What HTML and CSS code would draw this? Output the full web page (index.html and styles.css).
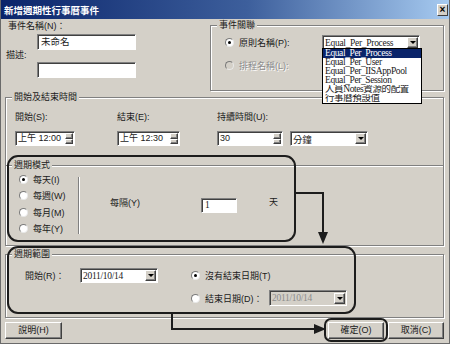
FILE: index.html
```html
<!DOCTYPE html>
<html lang="zh-Hant">
<head>
    <meta charset="utf-8">
    <title>新增週期性行事曆事件</title>
    <link rel="stylesheet" href="styles.css">
</head>
<body>
<div class="dialog">
    <div class="titlebar">
        <span class="title">新增週期性行事曆事件</span>
        <span class="close">×</span>
    </div>
    <div class="content">
        <div class="top">
            <div class="names">
                <div class="lbl name-lbl">事件名稱(N)：</div>
                <div class="field name-field">未命名</div>
                <div class="lbl desc-lbl">描述:</div>
                <div class="field desc-field"></div>
            </div>
            <div class="group assoc">
                <div class="legend">事件關聯</div>
                <div class="assoc-body">
                    <div class="opt"><span class="radio checked"></span>原則名稱(P):</div>
                    <div class="combo policy">
                        <span class="combo-text serif">Equal_Per_Process</span><span class="drop"></span>
                        <ul class="droplist serif">
                            <li class="sel">Equal_Per_Process</li>
                            <li>Equal_Per_User</li>
                            <li>Equal_Per_IISAppPool</li>
                            <li>Equal_Per_Session</li>
                            <li>人員Notes資源的配置</li>
                            <li>行事曆預設值</li>
                        </ul>
                    </div>
                    <div class="opt disabled"><span class="radio off"></span>排程名稱(L):</div>
                </div>
            </div>
        </div>

        <div class="group times">
            <div class="legend">開始及結束時間</div>
            <div class="times-body">
                <div class="lbl">開始(S):</div>
                <div class="lbl">結束(E):</div>
                <div class="lbl">持續時間(U):</div>
                <div class="spin w60"><span class="spin-text">上午 12:00</span><span class="spin-btns"><i></i><i></i></span></div>
                <div class="spin w63"><span class="spin-text">上午 12:30</span><span class="spin-btns"><i></i><i></i></span></div>
                <div class="duration">
                    <div class="spin w66"><span class="spin-text">30</span><span class="spin-btns"><i></i><i></i></span></div>
                    <div class="combo unit"><span class="combo-text">分鐘</span><span class="drop"></span></div>
                </div>
            </div>
        </div>

        <div class="group pattern">
            <div class="legend">週期模式</div>
            <div class="pattern-body">
                <div class="freq-types">
                    <div class="opt"><span class="radio checked"></span>每天(I)</div>
                    <div class="opt"><span class="radio"></span>每週(W)</div>
                    <div class="opt"><span class="radio"></span>每月(M)</div>
                    <div class="opt"><span class="radio"></span>每年(Y)</div>
                </div>
                <div class="sep"></div>
                <div class="every">
                    <div class="lbl every-lbl">每隔(Y)</div>
                    <div class="field every-field serif">1</div>
                    <div class="lbl day-lbl">天</div>
                </div>
            </div>
        </div>

        <div class="group range">
            <div class="legend">週期範圍</div>
            <div class="range-body">
                <div class="start">
                    <div class="lbl start-lbl">開始(R)：</div>
                    <div class="combo date"><span class="combo-text serif">2011/10/14</span><span class="drop"></span></div>
                </div>
                <div class="ends">
                    <div class="opt"><span class="radio checked"></span>沒有結束日期(T)</div>
                    <div class="opt">
                        <span class="radio"></span><span class="end-lbl">結束日期(D)：</span>
                        <div class="combo date off"><span class="combo-text serif">2011/10/14</span><span class="drop"></span></div>
                    </div>
                </div>
            </div>
        </div>

        <div class="buttons">
            <div class="btn help">說明(H)</div>
            <div class="btn ok">確定(O)</div>
            <div class="btn">取消(C)</div>
        </div>
    </div>
</div>

<svg class="marks" width="450" height="344" viewBox="0 0 450 344">
    <g fill="none" stroke="#1c1c1c" stroke-width="2">
        <rect x="8" y="156" width="287" height="85" rx="10"/>
        <rect x="8" y="247" width="347" height="66" rx="10"/>
        <rect x="325" y="319" width="62" height="22" rx="6"/>
        <polyline points="295,193 323,193 323,234"/>
        <polyline points="172,313 172,329 315,329"/>
    </g>
    <g fill="#1c1c1c">
        <polygon points="318,232 328,232 323,244"/>
        <polygon points="314,324 314,334 326,329"/>
    </g>
</svg>
</body>
</html>
```

FILE: styles.css
```css
body {
    margin: 0;
    background: #d4d0c8;
    font-family: "Liberation Sans", "Noto Sans CJK TC", sans-serif;
    font-size: 9px;
    color: #1a1a1a;
}
.serif {
    font-family: "Liberation Serif", "Noto Sans CJK TC", serif;
}
.dialog {
    width: 450px;
    height: 344px;
    box-sizing: border-box;
    border: 1px solid #6a6a6a;
    border-top: 0;
    background: #d4d0c8;
    overflow: hidden;
}
.titlebar {
    height: 19px;
    display: flex;
    align-items: center;
    justify-content: space-between;
    padding: 0 1px 0 3px;
    background: linear-gradient(to right, #0a246a, #3d5f9c 55%, #a6caf0);
    color: #fff;
}
.title {
    font-weight: bold;
    font-size: 9.5px;
}
.close {
    width: 11px;
    height: 12px;
    box-sizing: border-box;
    background: #d4d0c8;
    color: #000;
    border: 1px solid;
    border-color: #fff #404040 #404040 #fff;
    font-size: 10px;
    font-weight: bold;
    line-height: 9px;
    text-align: center;
}
.content {
    padding: 0 5px 0 4px;
}

/* common controls */
.lbl {
    line-height: 10px;
    white-space: nowrap;
}
.field, .combo, .spin {
    box-sizing: border-box;
    background: #fff;
    border: 1px solid;
    border-color: #808080 #fff #fff #808080;
    box-shadow: inset 1px 1px #404040;
}
.field {
    padding-left: 3px;
    line-height: 14px;
    font-size: 9.5px;
}
.group {
    box-sizing: border-box;
    border: 1px solid #808080;
    box-shadow: inset 1px 1px #fff, 1px 1px #fff;
}
.legend {
    width: max-content;
    height: 11px;
    line-height: 11px;
    margin: -6px 0 0 6px;
    padding: 0 2px;
    background: #d4d0c8;
}
.opt {
    display: flex;
    align-items: center;
    white-space: nowrap;
}
.radio {
    position: relative;
    width: 9px;
    height: 9px;
    box-sizing: border-box;
    border-radius: 50%;
    border: 1px solid #7a7a7a;
    border-right-color: #e8e8e8;
    border-bottom-color: #e8e8e8;
    background: #fff;
    margin-right: 5px;
    flex: none;
}
.radio.checked::after {
    content: "";
    position: absolute;
    left: 2px;
    top: 2px;
    width: 3px;
    height: 3px;
    border-radius: 50%;
    background: #000;
}
.radio.off {
    background: #d4d0c8;
}
.disabled {
    color: #8c8c8c;
    text-shadow: 1px 1px #fff;
}
.combo {
    position: relative;
    display: flex;
    align-items: center;
    height: 15px;
}
.combo-text {
    flex: 1;
    padding-left: 2px;
    font-size: 9.5px;
    letter-spacing: -0.3px;
    white-space: nowrap;
    overflow: hidden;
}
.drop, .spin-btns i {
    box-sizing: border-box;
    background: #d4d0c8;
    border: 1px solid;
    border-color: #fff #404040 #404040 #fff;
    box-shadow: inset -1px -1px #808080;
    display: flex;
    align-items: center;
    justify-content: center;
}
.drop {
    width: 11px;
    height: 11px;
    margin-right: 1px;
}
.drop::after {
    content: "";
    border-left: 3px solid transparent;
    border-right: 3px solid transparent;
    border-top: 3px solid #000;
}

/* top area */
.top {
    display: flex;
    height: 72px;
}
.names {
    width: 205px;
}
.name-lbl {
    margin: 2px 0 0 3px;
}
.field.name-field, .field.desc-field {
    width: 99px;
    height: 16px;
    margin-left: 32px;
}
.name-field {
    margin-top: 3px;
}
.desc-lbl {
    margin-left: 1px;
}
.desc-field {
    margin-top: 2px;
}
.assoc {
    flex: 1;
    margin-top: 6px;
    height: 66px;
}
.assoc-body {
    display: grid;
    grid-template-columns: 97px 98px;
    grid-template-rows: 15px 15px;
    row-gap: 8px;
    align-items: center;
    padding: 4px 0 0 14px;
}
.policy {
    height: 15px;
}
.droplist {
    position: absolute;
    top: 12px;
    left: -1px;
    width: 98px;
    margin: 0;
    padding: 0;
    list-style: none;
    background: #fff;
    border: 1px solid #000;
    z-index: 2;
}
.droplist li {
    height: 9px;
    line-height: 9px;
    padding-left: 2px;
    font-size: 9.5px;
    letter-spacing: -0.4px;
    white-space: nowrap;
    overflow: hidden;
}
.droplist li.sel {
    background: #0a246a;
    color: #fff;
}

/* start and end time */
.times {
    margin-top: 6px;
    height: 68px;
    border-bottom: 0;
}
.times-body {
    display: grid;
    grid-template-columns: 102px 100px 1fr;
    grid-template-rows: 10px 15px;
    row-gap: 9px;
    padding: 9px 0 0 9px;
}
.spin {
    display: flex;
    height: 15px;
}
.spin-text {
    flex: 1;
    padding-left: 2px;
    line-height: 13px;
    white-space: nowrap;
}
.spin-btns {
    display: flex;
    flex-direction: column;
    width: 8px;
    margin: 1px 1px 1px 0;
}
.spin-btns i {
    flex: 1;
}
.w60 { width: 60px; }
.w63 { width: 63px; }
.w66 { width: 66px; }
.duration {
    display: flex;
    gap: 7px;
}
.unit {
    width: 78px;
}

/* recurrence pattern */
.pattern {
    height: 81px;
}
.pattern-body {
    display: flex;
    height: 64px;
}
.freq-types {
    width: 72px;
    box-sizing: border-box;
    padding-left: 13px;
}
.freq-types .opt {
    height: 16.5px;
}
.sep {
    width: 0;
    height: 57px;
    margin-top: 6px;
    border-left: 1px solid #808080;
    border-right: 1px solid #fff;
}
.every {
    display: flex;
    align-items: center;
    padding: 5px 0 0 30px;
}
.every-lbl {
    width: 91px;
    margin-bottom: 5px;
}
.field.every-field {
    width: 36px;
    height: 15px;
    line-height: 13px;
}
.day-lbl {
    margin: 0 0 8px 32px;
}

/* recurrence range */
.range {
    margin-top: 8px;
    height: 64px;
}
.range-body {
    display: flex;
    align-items: flex-start;
    padding: 8px 0 0 19px;
}
.start {
    display: flex;
    align-items: center;
    height: 15px;
}
.start-lbl {
    width: 55px;
}
.date {
    width: 78px;
}
.date.off {
    background: #d4d0c8;
    color: #8c8c8c;
}
.ends {
    display: grid;
    grid-template-rows: 15px 16px;
    row-gap: 7px;
    margin-left: 33px;
}
.end-lbl {
    width: 64px;
}
.ends .date {
    height: 16px;
}

/* buttons */
.buttons {
    display: flex;
    gap: 4px;
    margin-top: 4px;
}
.btn {
    width: 56px;
    height: 17px;
    box-sizing: border-box;
    border: 1px solid;
    border-color: #fff #404040 #404040 #fff;
    box-shadow: inset -1px -1px #808080;
    text-align: center;
    line-height: 15px;
}
.btn.help {
    width: 57px;
}
.btn.ok {
    margin-left: auto;
}

.marks {
    position: absolute;
    top: 0;
    left: 0;
    pointer-events: none;
}
```
